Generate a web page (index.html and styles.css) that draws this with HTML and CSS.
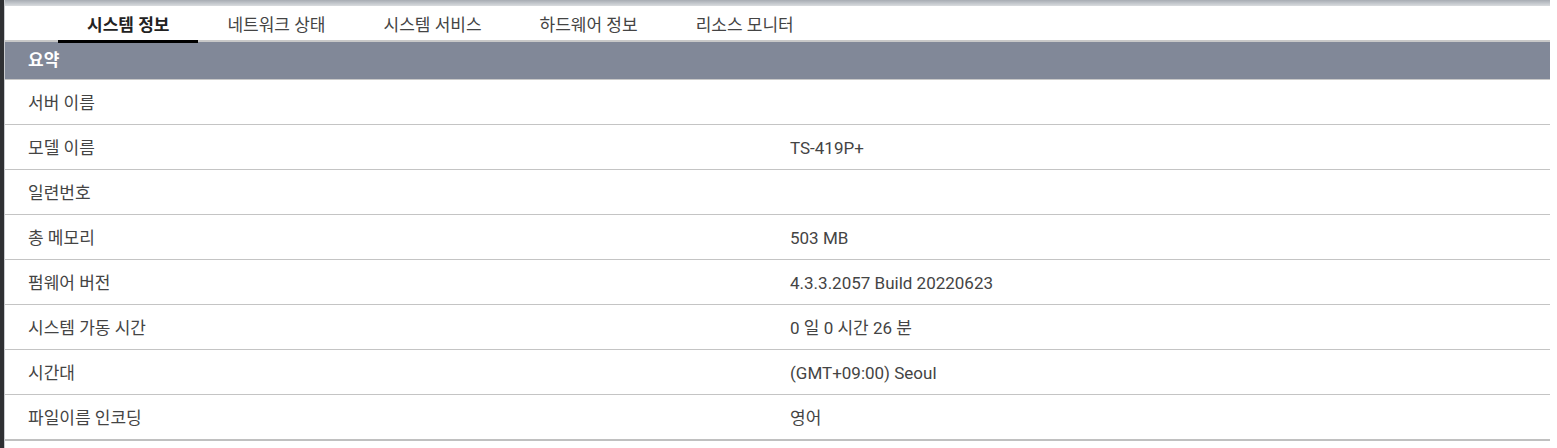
FILE: index.html
```html
<!DOCTYPE html>
<html lang="ko">
<head>
  <meta charset="UTF-8">
  <meta name="viewport" content="width=device-width, initial-scale=1.0">
  <title>시스템 정보</title>
  <link rel="stylesheet" href="styles.css">
</head>
<body>
  <div class="side-strip"></div>

  <div class="panel">
    <div class="top-bar"></div>

    <!-- Tabs -->
    <div class="tabs">
      <div class="tab active">시스템 정보</div>
      <div class="tab">네트워크 상태</div>
      <div class="tab">시스템 서비스</div>
      <div class="tab">하드웨어 정보</div>
      <div class="tab">리소스 모니터</div>
    </div>

    <!-- Summary table -->
    <div class="section-title">요약</div>
    <div class="info-table">
      <div class="row"><div class="label">서버 이름</div><div class="value"></div></div>
      <div class="row"><div class="label">모델 이름</div><div class="value">TS-419P+</div></div>
      <div class="row"><div class="label">일련번호</div><div class="value"></div></div>
      <div class="row"><div class="label">총 메모리</div><div class="value">503 MB</div></div>
      <div class="row"><div class="label">펌웨어 버전</div><div class="value">4.3.3.2057 Build 20220623</div></div>
      <div class="row"><div class="label">시스템 가동 시간</div><div class="value">0 일 0 시간 26 분</div></div>
      <div class="row"><div class="label">시간대</div><div class="value">(GMT+09:00) Seoul</div></div>
      <div class="row last"><div class="label">파일이름 인코딩</div><div class="value">영어</div></div>
    </div>
  </div>
</body>
</html>
```

FILE: styles.css
```css
html, body {
  margin: 0;
  height: 100%;
}
body {
  display: flex;
  background: #fff;
  font-family: Roboto, "Noto Sans CJK KR", sans-serif;
  font-size: 17px;
  color: #444;
}
.side-strip {
  width: 4px;
  background: #2f3033;
  flex-shrink: 0;
}
.panel {
  width: 1545px;
  border-left: 1px solid #c9cbcf;
}
.top-bar {
  height: 6px;
  background: linear-gradient(#a7acb3, #d9dcdf);
}
.tabs {
  display: flex;
  height: 34px;
  padding-left: 53px;
  border-bottom: 2px solid #c8c8c8;
}
.tab {
  padding: 4px 29px 0;
  line-height: 30px;
  height: 30px;
  color: #444;
  border-bottom: 3px solid transparent;
  margin-bottom: -1px;
}
.tab.active {
  font-weight: bold;
  color: #222;
  border-bottom-color: #000;
}
.section-title {
  height: 37px;
  line-height: 37px;
  padding-left: 23px;
  background: #818898;
  color: #fff;
  font-weight: bold;
  border-bottom: 1px solid #c8c8c8;
}
.row {
  display: flex;
  height: 44px;
  line-height: 47px;
  border-bottom: 1px solid #c4c4c4;
}
.row.last {
  border-bottom: 2px solid #c0c0c0;
}
.label {
  width: 762px;
  padding-left: 23px;
}
.value {
  flex: 1;
}
```
